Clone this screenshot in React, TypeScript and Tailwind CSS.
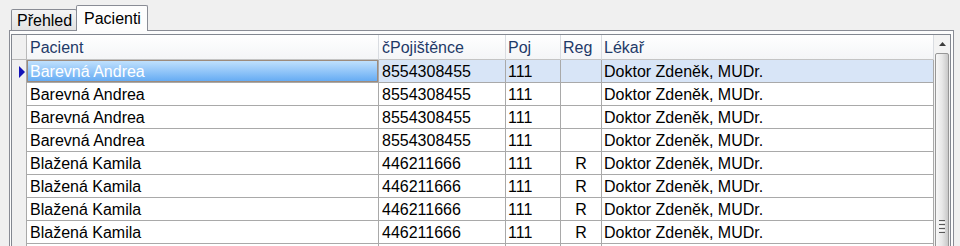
import React from "react";

type Row = { name: string; cp: string; poj: string; reg: string; lek: string };

const rows: Row[] = [
  { name: "Barevná Andrea", cp: "8554308455", poj: "111", reg: "", lek: "Doktor Zdeněk, MUDr." },
  { name: "Barevná Andrea", cp: "8554308455", poj: "111", reg: "", lek: "Doktor Zdeněk, MUDr." },
  { name: "Barevná Andrea", cp: "8554308455", poj: "111", reg: "", lek: "Doktor Zdeněk, MUDr." },
  { name: "Barevná Andrea", cp: "8554308455", poj: "111", reg: "", lek: "Doktor Zdeněk, MUDr." },
  { name: "Blažená Kamila", cp: "446211666", poj: "111", reg: "R", lek: "Doktor Zdeněk, MUDr." },
  { name: "Blažená Kamila", cp: "446211666", poj: "111", reg: "R", lek: "Doktor Zdeněk, MUDr." },
  { name: "Blažená Kamila", cp: "446211666", poj: "111", reg: "R", lek: "Doktor Zdeněk, MUDr." },
  { name: "Blažená Kamila", cp: "446211666", poj: "111", reg: "R", lek: "Doktor Zdeněk, MUDr." },
  { name: "", cp: "", poj: "", reg: "", lek: "" },
];

function Indicator() {
  return (
    <svg width="7" height="12" viewBox="0 0 7 12" className="block">
      <polygon points="0,0 6,6 0,12" fill="#1414b8" />
    </svg>
  );
}

export default function App() {
  return (
    <div className="w-[960px] h-[246px] overflow-hidden bg-[#f0f0f0] font-['Liberation_Sans',Arial,sans-serif] text-[16px] leading-none text-black pl-[9px] pt-[5px]">
      {/* tab strip */}
      <div className="flex items-end h-[25px] pl-[2px]">
        <div className="h-[21px] w-[66px] border border-b-0 border-[#898c95] rounded-t-[2px] bg-gradient-to-b from-[#f4f4f4] to-[#e2e2e2] pl-[5px] pt-[2px] flex items-center whitespace-nowrap">
          Přehled
        </div>
        <div className="relative z-10 -mb-px -ml-px h-[26px] w-[72px] border border-b-0 border-[#898c95] rounded-t-[2px] bg-[#fdfdfd] pl-[7px] flex items-center whitespace-nowrap">
          Pacienti
        </div>
      </div>

      {/* tab page */}
      <div className="w-[945px] h-[240px] border border-[#898c95] bg-[#fcfcfc] pt-[3px] pl-[1px] pr-[2px]">
        {/* grid */}
        <div className="w-[940px] h-[240px] border border-[#828790] bg-white flex">
          <div className="w-[922px] flex flex-col">
            {/* header */}
            <div className="flex h-[25px] shrink-0 text-[#1f3a68]">
              <div className="w-[15px] h-full bg-[#f0f0f0] border-r border-b border-[#b9b9b9]" />
              <div className="w-[352px] h-full bg-gradient-to-b from-white to-[#f4f5f7] border-r border-b border-[#d9dce1] border-b-[#c4c4c4] pl-[3px] pt-[2px] flex items-center">Pacient</div>
              <div className="w-[127px] h-full bg-gradient-to-b from-white to-[#f4f5f7] border-r border-b border-[#d9dce1] border-b-[#c4c4c4] pl-[3px] pt-[2px] flex items-center">čPojištěnce</div>
              <div className="w-[55px] h-full bg-gradient-to-b from-white to-[#f4f5f7] border-r border-b border-[#d9dce1] border-b-[#c4c4c4] pl-[2px] pt-[2px] flex items-center">Poj</div>
              <div className="w-[41px] h-full bg-gradient-to-b from-white to-[#f4f5f7] border-r border-b border-[#d9dce1] border-b-[#c4c4c4] pl-[2px] pt-[2px] flex items-center">Reg</div>
              <div className="w-[332px] h-full bg-gradient-to-b from-white to-[#f4f5f7] border-r border-b border-[#d9dce1] border-b-[#c4c4c4] pl-[2px] pt-[2px] flex items-center">Lékař</div>
            </div>
            {/* rows */}
            {rows.map((r, i) => {
              const sel = i === 0;
              const bg = sel ? "bg-[#d8e5f7]" : "bg-white";
              return (
                <div key={i} className="flex h-[23px] shrink-0 whitespace-nowrap">
                  <div className="w-[15px] h-full bg-[#f0f0f0] border-r border-[#a9a9a9] flex items-center pl-[7px] pt-[1px]">
                    {sel ? <Indicator /> : null}
                  </div>
                  <div className={`w-[352px] h-full border-r border-b border-[#a9a9a9] ${bg}`}>
                    {sel ? (
                      <div className="h-full w-full border border-[#9d8b7c] bg-gradient-to-b from-[#bfe0fd] to-[#66acf3] pl-[2px] pt-[1px] flex items-center text-white">
                        {r.name}
                      </div>
                    ) : (
                      <div className="h-full pl-[3px] pt-[2px] flex items-center">{r.name}</div>
                    )}
                  </div>
                  <div className={`w-[127px] h-full border-r border-b border-[#a9a9a9] pl-[3px] pt-[2px] flex items-center ${bg}`}>{r.cp}</div>
                  <div className={`w-[55px] h-full border-r border-b border-[#a9a9a9] pl-[2px] pt-[2px] flex items-center ${bg}`}>{r.poj}</div>
                  <div className={`w-[41px] h-full border-r border-b border-[#a9a9a9] pt-[2px] flex items-center justify-center ${bg}`}>{r.reg}</div>
                  <div className={`w-[332px] h-full border-r border-b border-[#a9a9a9] pl-[2px] pt-[2px] flex items-center ${bg}`}>{r.lek}</div>
                </div>
              );
            })}
          </div>

          {/* scrollbar */}
          <div className="w-[16px] bg-[#f3f3f3] flex flex-col">
            <div className="h-[17px] shrink-0 flex items-center justify-center pt-[1px]">
              <svg width="7" height="4" viewBox="0 0 7 4" className="block">
                <polygon points="3.5,0 7,4 0,4" fill="#3c3c3c" />
              </svg>
            </div>
            <div className="mt-[1px] ml-[1px] w-[14px] h-[346px] shrink-0 rounded-[2px] border border-[#979797] bg-gradient-to-r from-[#f7f7f7] via-[#e8e8e8] to-[#c9c9c9] flex flex-col items-center justify-center gap-[1px]">
              <div className="w-[6px] h-[1px] bg-[#5a5a5a]" />
              <div className="w-[6px] h-[1px] bg-[#f8f8f8]" />
              <div className="w-[6px] h-[1px] bg-[#5a5a5a]" />
              <div className="w-[6px] h-[1px] bg-[#f8f8f8]" />
              <div className="w-[6px] h-[1px] bg-[#5a5a5a]" />
              <div className="w-[6px] h-[1px] bg-[#f8f8f8]" />
              <div className="w-[6px] h-[1px] bg-[#5a5a5a]" />
            </div>
          </div>
        </div>
      </div>
    </div>
  );
}
